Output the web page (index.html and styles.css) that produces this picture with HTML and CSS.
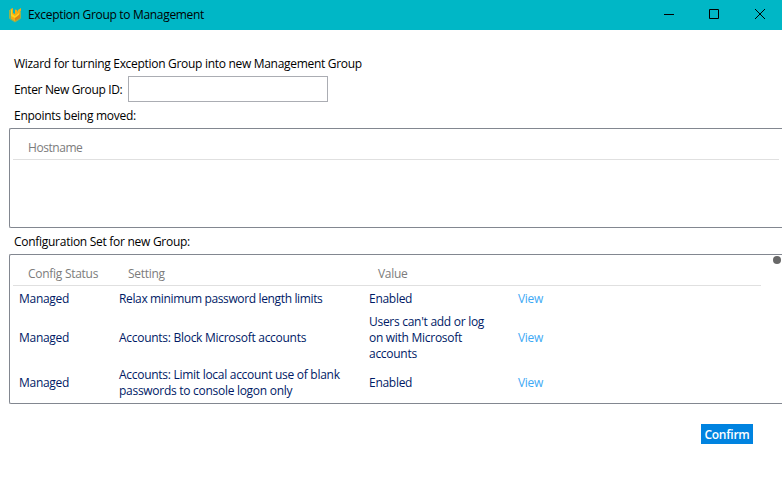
FILE: index.html
```html
<!DOCTYPE html>
<html lang="en">
<head>
<meta charset="utf-8">
<title>Exception Group to Management</title>
<link rel="stylesheet" href="styles.css">
</head>
<body>
<header class="titlebar">
  <svg class="logo" width="14" height="16" viewBox="0 0 14 16">
    <path d="M1.500 3v8.500l5.500 3.500 5.500-3.500V5" fill="none" stroke="#8fb552" stroke-width="1"/>
    <path d="M2.500 2 5 1v5l2 1V2.500l2 .5v2l1-2 3-2v3l-1 1v6l-5 3.500-4.500-3z" fill="#f3ac13"/>
    <path d="M3 3l1-.5V7l3 2 4-3v3l-4 2-4-2z" fill="#ffd21c"/>
    <path d="M7 14V11l5-4v4z" fill="#dc8714"/>
  </svg>
  <span class="title">Exception Group to Management</span>
  <nav class="controls">
    <svg width="10" height="10" viewBox="0 0 10 10"><path d="M0 5.500h10"/></svg>
    <svg width="10" height="10" viewBox="0 0 10 10"><path d="M.5.5h9v9h-9z"/></svg>
    <svg class="close" width="10" height="10" viewBox="0 0 10 10"><path d="m0 0 10 10M10 0 0 10"/></svg>
  </nav>
</header>
<main>
  <p class="line intro">Wizard for turning Exception Group into new Management Group</p>
  <div class="field"><label for="gid">Enter New Group ID:</label><input id="gid" type="text"></div>
  <p class="line moved">Enpoints being moved:</p>
  <section class="list hosts">
    <div class="head"><span>Hostname</span></div>
  </section>
  <p class="line conf">Configuration Set for new Group:</p>
  <section class="list settings">
    <div class="head cols"><span>Config Status</span><span>Setting</span><span>Value</span></div>
    <div class="row cols r1"><span>Managed</span><span class="long">Relax minimum password length limits</span><span>Enabled</span><a>View</a></div>
    <div class="row cols r2"><span>Managed</span><span>Accounts: Block Microsoft accounts</span><span>Users can't add or log<br>on with Microsoft<br>accounts</span><a>View</a></div>
    <div class="row cols r3"><span>Managed</span><span>Accounts: Limit local account use of blank<br>passwords to console logon only</span><span>Enabled</span><a>View</a></div>
    <i class="thumb"></i>
  </section>
  <button class="confirm">Confirm</button>
</main>
</body>
</html>
```
FILE: styles.css
```css
* { box-sizing: border-box; }
body {
  margin: 0;
  width: 782px;
  height: 488px;
  overflow: hidden;
  background: #fff;
  color: #000;
  font: 12px/16px "Open Sans", "Noto Sans", sans-serif;
  letter-spacing: -0.28px;
}
.titlebar {
  display: flex;
  align-items: center;
  height: 30px;
  padding: 0 17px 0 8px;
  background: #00b7c6;
}
.logo { margin-right: 6px; }
.title { letter-spacing: -0.32px; }
.controls { display: flex; gap: 35px; margin: -2px 0 0 auto; }
.controls svg { fill: none; stroke: #000; stroke-width: 1; }
.controls .close { margin-left: 1px; }
main { padding: 26px 0 0 9px; }
.line { margin: 0; padding-left: 5px; height: 16px; white-space: nowrap; }
.intro { letter-spacing: -0.3px; }
.field { display: flex; align-items: center; margin-top: 4px; padding-left: 5px; height: 26px; }
.field label { width: 114px; padding-top: 2px; white-space: nowrap; letter-spacing: -0.36px; }
.field input { width: 200px; height: 26px; padding: 0 4px; border: 1px solid #abadb3; background: #fff; font: inherit; }
.moved { margin-top: 6px; }
.list { position: relative; border: 1px solid #828790; border-right: 0; border-radius: 2px 0 0 2px; }
.hosts { height: 100px; margin-top: 4px; }
.conf { margin-top: 6px; }
.settings { height: 150px; margin-top: 4px; }
.head {
  height: 31px;
  margin: 0 3px;
  padding: 11px 0 0 15px;
  border-bottom: 1px solid #e0e0e0;
  color: #7c7c7c;
}
.hosts .head { letter-spacing: -0.45px; }
.settings .head { margin-right: 21px; }
.cols { display: grid; grid-template-columns: 100px 250px 149px 1fr; }
.row { align-items: center; padding-left: 9px; color: #001a66; white-space: nowrap; }
.long { letter-spacing: -0.36px; }
.r1 { height: 26px; }
.r2 { height: 52px; }
.r3 { height: 38px; }
.row a { color: #3ea9f5; }
.thumb { position: absolute; right: 1px; top: 1px; width: 8px; height: 8px; border-radius: 50%; background: #686868; }
.confirm {
  display: block;
  width: 52px;
  height: 20px;
  margin: 20px 29px 0 auto;
  padding: 2px 0 0;
  border: 0;
  background: #0083e0;
  color: #fff;
  font: 600 12px/18px "Open Sans", "Noto Sans", sans-serif;
  letter-spacing: -0.25px;
}
```
